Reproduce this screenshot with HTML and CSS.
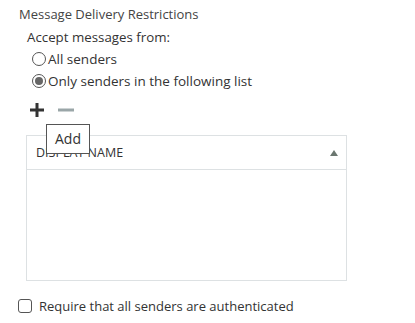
FILE: index.html
```html
<!DOCTYPE html>
<html>
<head>
<meta charset="utf-8">
<link rel="stylesheet" href="styles.css">
</head>
<body>
<div class="panel">
  <div class="title">Message Delivery Restrictions</div>
  <div class="group">
    <div class="label">Accept messages from:</div>
    <div class="radios">
      <div class="radio"><span class="circle"></span><span>All senders</span></div>
      <div class="radio"><span class="circle checked"></span><span>Only senders in the following list</span></div>
    </div>
    <div class="toolbar">
      <svg class="icon" width="16" height="16" viewBox="0 0 16 16"><path d="M8 1v14M1 8h14" stroke="#333" stroke-width="3" fill="none"/></svg>
      <svg class="icon minus" width="18" height="16" viewBox="0 0 18 16"><path d="M1 8h16" stroke="#9aa6a8" stroke-width="3" fill="none"/></svg>
      <div class="tooltip">Add</div>
    </div>
    <div class="table">
      <div class="thead"><span>DISPLAY NAME</span><span class="sort"></span></div>
      <div class="tbody"></div>
    </div>
  </div>
  <div class="check"><span class="box"></span><span>Require that all senders are authenticated</span></div>
</div>
</body>
</html>
```
FILE: styles.css
```css
html, body { margin: 0; padding: 0; background: #fff; }
body { font-family: "Open Sans", "Noto Sans", sans-serif; color: #333; width: 415px; height: 323px; overflow: hidden; }
.panel { padding: 5px 0 0 19px; }
.title { font-size: 13px; line-height: 18px; color: #444; }
.group { padding-left: 7px; }
.label { font-size: 13.3px; line-height: 20px; padding: 4px 0 0 1px; }
.radios { padding-left: 6px; padding-top: 1px; }
.radio { display: flex; align-items: center; font-size: 13.5px; line-height: 22px; }
.circle { width: 12px; height: 12px; border: 1px solid #555; border-radius: 50%; margin-right: 2px; box-sizing: content-box; display: flex; align-items: center; justify-content: center; }
.circle.checked::after { content: ""; width: 8px; height: 8px; border-radius: 50%; background: #666; }
.toolbar { position: relative; display: flex; align-items: center; gap: 12px; height: 26px; margin: 5px 0 0 3px; }
.icon { display: block; }
.tooltip { position: absolute; left: 17px; top: 27px; width: 42px; height: 28px; border: 1px solid #555; background: #fff; font-size: 14px; line-height: 28px; text-align: center; z-index: 2; color: #333; }
.table { margin-top: 12px; width: 319px; height: 144px; border: 1px solid #dde1e3; }
.thead { display: flex; align-items: center; justify-content: space-between; height: 33px; border-bottom: 1px solid #dde1e3; padding: 0 8px 0 9px; font-size: 12.5px; }
.sort { width: 0; height: 0; border-left: 4px solid transparent; border-right: 4px solid transparent; border-bottom: 6px solid #6b7770; }
.check { display: flex; align-items: center; gap: 7px; margin-top: 15px; font-size: 13px; line-height: 20px; margin-left: -1px; }
.box { width: 12px; height: 12px; border: 1px solid #555; border-radius: 3px; box-sizing: content-box; }
```
